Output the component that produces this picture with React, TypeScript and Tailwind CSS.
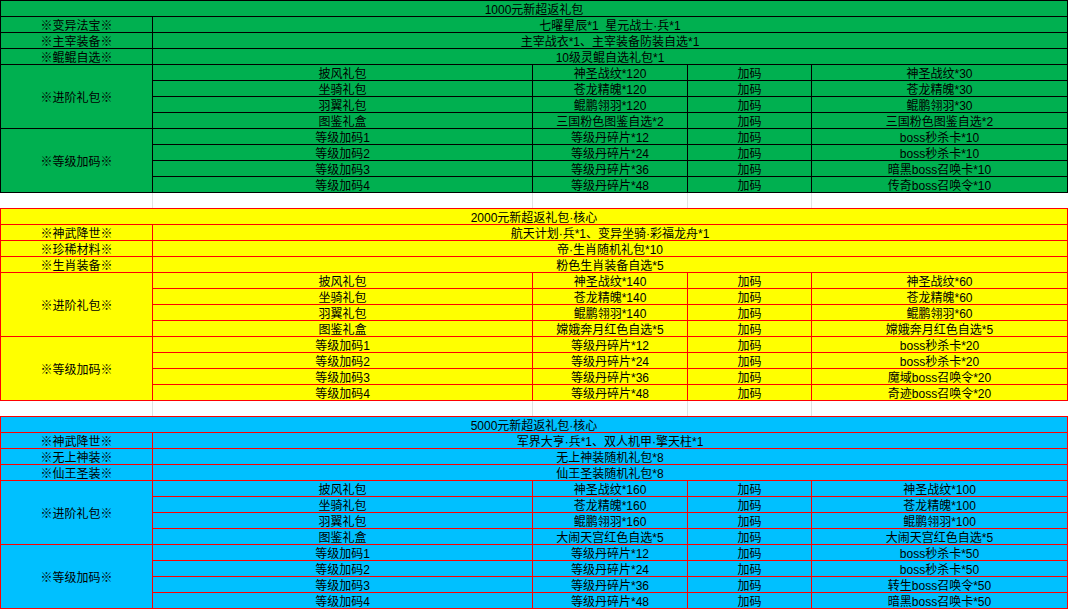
import React from "react";

type Row4 = [string, string, string, string];

interface TableProps {
  bg: string;
  bd: string;
  title: string;
  top: [string, string][];
  adv: Row4[];
  lvl: Row4[];
}

const cell = "border-r border-b flex items-center justify-center whitespace-nowrap overflow-hidden pt-[3px]";

function Table({ bg, bd, title, top, adv, lvl }: TableProps) {
  const c = `${cell} ${bd}`;
  return (
    <div className={`grid grid-cols-[152px_380px_155px_124px_256px] auto-rows-[16px] border-t border-l ${bd} ${bg}`}>
      <div className={`${c} col-span-5`}>{title}</div>
      {top.map(([a, b]) => (
        <React.Fragment key={a}>
          <div className={c}>{a}</div>
          <div className={`${c} col-span-4`}>{b}</div>
        </React.Fragment>
      ))}
      {[
        ["※进阶礼包※", adv],
        ["※等级加码※", lvl],
      ].map(([label, rows]) => (
        <React.Fragment key={label as string}>
          <div className={`${c} row-span-4`}>{label as string}</div>
          {(rows as Row4[]).map((r, i) => (
            <React.Fragment key={i}>
              {r.map((t, j) => (
                <div key={j} className={c}>
                  {t}
                </div>
              ))}
            </React.Fragment>
          ))}
        </React.Fragment>
      ))}
    </div>
  );
}

function Blank() {
  return (
    <div className="grid grid-cols-[153px_380px_155px_124px_256px] h-[15px] bg-white">
      <div className="border-r border-[#e1e1e1]" />
      <div className="border-r border-[#e1e1e1]" />
      <div className="border-r border-[#e1e1e1]" />
      <div className="border-r border-[#e1e1e1]" />
      <div />
    </div>
  );
}

export default function App() {
  return (
    <div
      className="w-[1068px] h-[609px] overflow-hidden bg-white text-black text-[12px] leading-[12px]"
      style={{ fontFamily: '"Liberation Sans", "Noto Sans CJK SC", sans-serif' }}
    >
      <Table
        bg="bg-[#00b050]"
        bd="border-black"
        title="1000元新超返礼包"
        top={[
          ["※变异法宝※", "七曜星辰*1\u00a0\u00a0星元战士·兵*1"],
          ["※主宰装备※", "主宰战衣*1、主宰装备防装自选*1"],
          ["※鲲鲲自选※", "10级灵鲲自选礼包*1"],
        ]}
        adv={[
          ["披风礼包", "神圣战纹*120", "加码", "神圣战纹*30"],
          ["坐骑礼包", "苍龙精魄*120", "加码", "苍龙精魄*30"],
          ["羽翼礼包", "鲲鹏翎羽*120", "加码", "鲲鹏翎羽*30"],
          ["图鉴礼盒", "三国粉色图鉴自选*2", "加码", "三国粉色图鉴自选*2"],
        ]}
        lvl={[
          ["等级加码1", "等级丹碎片*12", "加码", "boss秒杀卡*10"],
          ["等级加码2", "等级丹碎片*24", "加码", "boss秒杀卡*10"],
          ["等级加码3", "等级丹碎片*36", "加码", "暗黑boss召唤卡*10"],
          ["等级加码4", "等级丹碎片*48", "加码", "传奇boss召唤令*10"],
        ]}
      />
      <Blank />
      <Table
        bg="bg-[#ffff00]"
        bd="border-[#ff0000]"
        title="2000元新超返礼包·核心"
        top={[
          ["※神武降世※", "航天计划·兵*1、变异坐骑·彩福龙舟*1"],
          ["※珍稀材料※", "帝·生肖随机礼包*10"],
          ["※生肖装备※", "粉色生肖装备自选*5"],
        ]}
        adv={[
          ["披风礼包", "神圣战纹*140", "加码", "神圣战纹*60"],
          ["坐骑礼包", "苍龙精魄*140", "加码", "苍龙精魄*60"],
          ["羽翼礼包", "鲲鹏翎羽*140", "加码", "鲲鹏翎羽*60"],
          ["图鉴礼盒", "嫦娥奔月红色自选*5", "加码", "嫦娥奔月红色自选*5"],
        ]}
        lvl={[
          ["等级加码1", "等级丹碎片*12", "加码", "boss秒杀卡*20"],
          ["等级加码2", "等级丹碎片*24", "加码", "boss秒杀卡*20"],
          ["等级加码3", "等级丹碎片*36", "加码", "魔域boss召唤令*20"],
          ["等级加码4", "等级丹碎片*48", "加码", "奇迹boss召唤令*20"],
        ]}
      />
      <Blank />
      <Table
        bg="bg-[#00c0ff]"
        bd="border-[#ff0000]"
        title="5000元新超返礼包·核心"
        top={[
          ["※神武降世※", "军界大亨·兵*1、双人机甲·擎天柱*1"],
          ["※无上神装※", "无上神装随机礼包*8"],
          ["※仙王圣装※", "仙王圣装随机礼包*8"],
        ]}
        adv={[
          ["披风礼包", "神圣战纹*160", "加码", "神圣战纹*100"],
          ["坐骑礼包", "苍龙精魄*160", "加码", "苍龙精魄*100"],
          ["羽翼礼包", "鲲鹏翎羽*160", "加码", "鲲鹏翎羽*100"],
          ["图鉴礼盒", "大闹天宫红色自选*5", "加码", "大闹天宫红色自选*5"],
        ]}
        lvl={[
          ["等级加码1", "等级丹碎片*12", "加码", "boss秒杀卡*50"],
          ["等级加码2", "等级丹碎片*24", "加码", "boss秒杀卡*50"],
          ["等级加码3", "等级丹碎片*36", "加码", "转生boss召唤令*50"],
          ["等级加码4", "等级丹碎片*48", "加码", "暗黑boss召唤卡*50"],
        ]}
      />
    </div>
  );
}
